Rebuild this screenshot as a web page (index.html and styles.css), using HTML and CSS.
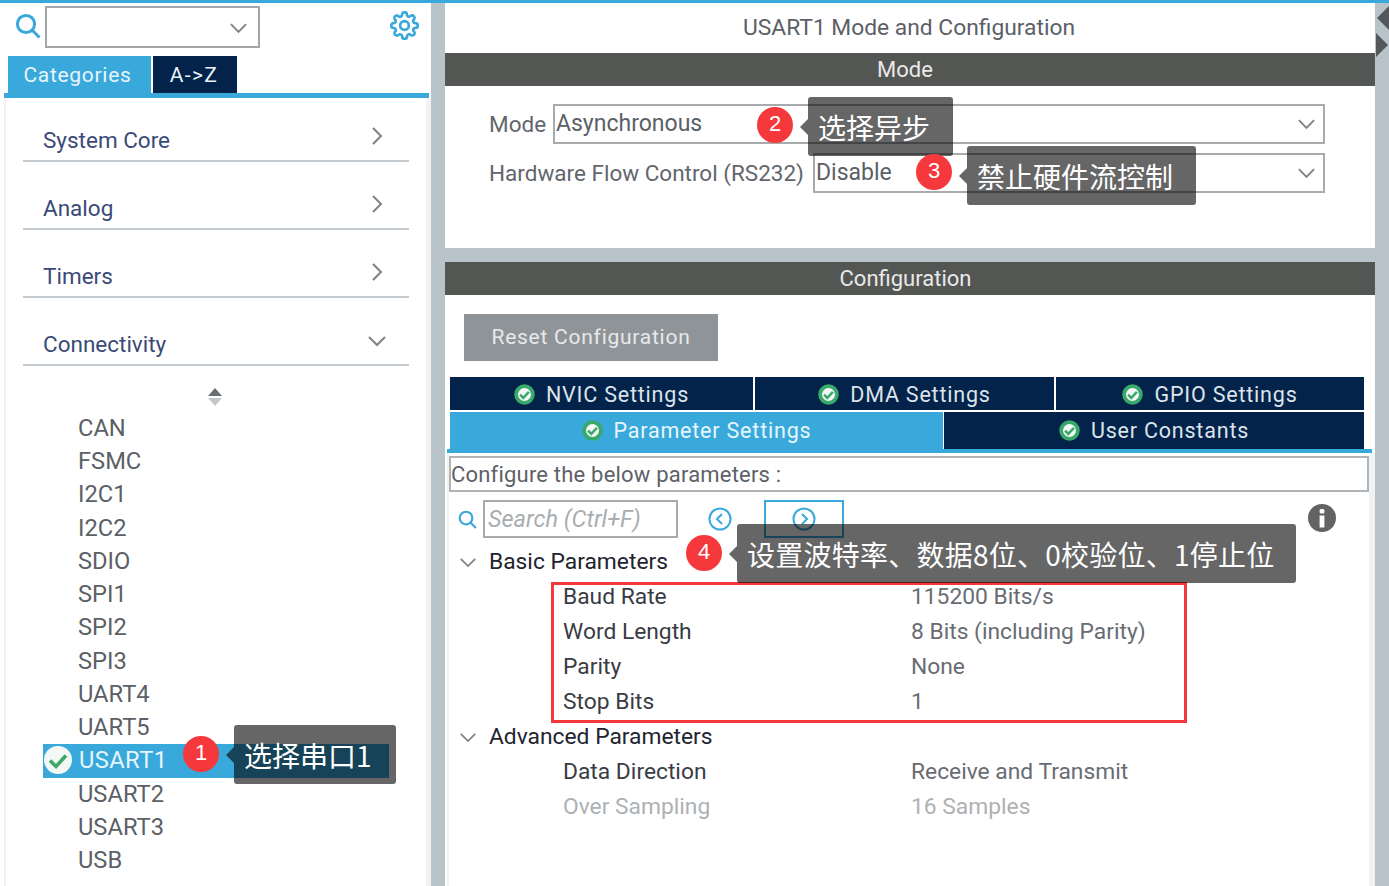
FILE: index.html
```html
<!DOCTYPE html>
<html lang="en">
<head>
<meta charset="utf-8">
<title>USART1 Mode and Configuration</title>
<link rel="stylesheet" href="styles.css">
</head>
<body>
<svg class="defs" width="0" height="0" aria-hidden="true">
  <symbol id="ok" viewBox="0 0 20 20">
    <circle cx="10" cy="10" r="8" fill="#f2f8f4" stroke="#39a96b" stroke-width="3.6"/>
    <path d="M5.8 10.2l3 3 5.4-5.6" fill="none" stroke="#39a96b" stroke-width="2.4"/>
  </symbol>
  <symbol id="down" viewBox="0 0 20 12">
    <path d="M2 2l8 8 8-8" fill="none" stroke="#7f8386" stroke-width="2"/>
  </symbol>
  <symbol id="right" viewBox="0 0 12 20">
    <path d="M2 2l8 8-8 8" fill="none" stroke="#7f8386" stroke-width="2"/>
  </symbol>
  <symbol id="search" viewBox="0 0 26 26">
    <circle cx="11" cy="11" r="8.6" fill="none" stroke="#39a9dc" stroke-width="3"/>
    <path d="M17 17l7.500 7.500" fill="none" stroke="#39a9dc" stroke-width="3"/>
  </symbol>
</svg>
<div class="app">
  <div class="topline"></div>
  <div class="columns">
    <aside class="left">
      <div class="searchbar">
        <svg class="search-icon"><use href="#search"/></svg>
        <div class="combo"><svg class="combo-arrow"><use href="#down"/></svg></div>
        <svg class="gear" viewBox="0 0 24 24"><circle cx="12" cy="12" r="3.6"/><path d="M19.4 15a1.65 1.65 0 0 0 .33 1.82l.06.06a2 2 0 0 1 0 2.83 2 2 0 0 1-2.83 0l-.06-.06a1.65 1.65 0 0 0-1.82-.33 1.65 1.65 0 0 0-1 1.51V21a2 2 0 0 1-2 2 2 2 0 0 1-2-2v-.09A1.65 1.65 0 0 0 9 19.4a1.65 1.65 0 0 0-1.82.33l-.06.06a2 2 0 0 1-2.83 0 2 2 0 0 1 0-2.83l.06-.06a1.65 1.65 0 0 0 .33-1.82 1.65 1.65 0 0 0-1.51-1H3a2 2 0 0 1-2-2 2 2 0 0 1 2-2h.09A1.65 1.65 0 0 0 4.6 9a1.65 1.65 0 0 0-.33-1.82l-.06-.06a2 2 0 0 1 0-2.83 2 2 0 0 1 2.83 0l.06.06a1.65 1.65 0 0 0 1.82.33H9a1.65 1.65 0 0 0 1-1.51V3a2 2 0 0 1 2-2 2 2 0 0 1 2 2v.09a1.65 1.65 0 0 0 1 1.51 1.65 1.65 0 0 0 1.82-.33l.06-.06a2 2 0 0 1 2.83 0 2 2 0 0 1 0 2.83l-.06.06a1.65 1.65 0 0 0-.33 1.82V9a1.65 1.65 0 0 0 1.51 1H21a2 2 0 0 1 2 2 2 2 0 0 1-2 2h-.09a1.65 1.65 0 0 0-1.51 1z"/></svg>
      </div>
      <div class="side-tabs">
        <div class="side-tab side-tab-on">Categories</div>
        <div class="side-tab side-tab-off">A-&gt;Z</div>
      </div>
      <div class="side-line"></div>
      <div class="side-body">
        <div class="cat"><span>System Core</span><svg class="cat-right"><use href="#right"/></svg></div>
        <div class="cat"><span>Analog</span><svg class="cat-right"><use href="#right"/></svg></div>
        <div class="cat"><span>Timers</span><svg class="cat-right"><use href="#right"/></svg></div>
        <div class="cat"><span>Connectivity</span><svg class="cat-down"><use href="#down"/></svg></div>
        <div class="sorter"><i class="sort-up"></i><i class="sort-down"></i></div>
        <ul class="periph">
          <li>CAN</li><li>FSMC</li><li>I2C1</li><li>I2C2</li><li>SDIO</li><li>SPI1</li><li>SPI2</li><li>SPI3</li><li>UART4</li><li>UART5</li>
          <li class="periph-on"><svg class="periph-ok" viewBox="0 0 28 28"><circle cx="14" cy="14" r="14" fill="#f4f8f5"/><path d="M6 14.500l6 6 10-11" fill="none" stroke="#3fa768" stroke-width="3.600"/></svg>USART1</li>
          <li>USART2</li><li>USART3</li><li>USB</li>
        </ul>
      </div>
    </aside>
    <main class="right">
      <section class="mode">
        <h1 class="title">USART1 Mode and Configuration</h1>
        <div class="bar bar-mode">Mode</div>
        <div class="mode-form">
          <div class="mode-row"><label class="label-a">Mode</label><div class="select">Asynchronous<svg class="select-arrow"><use href="#down"/></svg></div></div>
          <div class="mode-row"><label class="label-b">Hardware Flow Control (RS232)</label><div class="select">Disable<svg class="select-arrow"><use href="#down"/></svg></div></div>
        </div>
      </section>
      <section class="config">
        <div class="bar bar-config">Configuration</div>
        <div class="reset-wrap"><div class="reset">Reset Configuration</div></div>
        <div class="tabs tabs-top">
          <div class="tab tab-nvic"><svg class="ok"><use href="#ok"/></svg>NVIC Settings</div>
          <div class="tab tab-dma"><svg class="ok"><use href="#ok"/></svg>DMA Settings</div>
          <div class="tab tab-gpio"><svg class="ok"><use href="#ok"/></svg>GPIO Settings</div>
        </div>
        <div class="tabs tabs-low">
          <div class="tab tab-param"><svg class="ok"><use href="#ok"/></svg>Parameter Settings</div>
          <div class="tab tab-user"><svg class="ok"><use href="#ok"/></svg>User Constants</div>
        </div>
        <div class="tabline"></div>
        <div class="config-inner">
          <div class="hint">Configure the below parameters :</div>
          <div class="tools">
            <svg class="tool-search"><use href="#search"/></svg>
            <div class="tool-input">Search (Ctrl+F)</div>
            <svg class="round round-prev" viewBox="0 0 24 24"><circle cx="12" cy="12" r="10.500"/><path d="M14 7l-5 5 5 5"/></svg>
            <div class="next-box"><svg class="round" viewBox="0 0 24 24"><circle cx="12" cy="12" r="10.500"/><path d="M10 7l5 5-5 5"/></svg></div>
            <svg class="info" viewBox="0 0 28 28"><circle cx="14" cy="14" r="14" fill="#636363"/><rect x="11.600" y="5" width="4.800" height="4.600" rx="1.500" fill="#fff"/><rect x="11.600" y="11.500" width="4.800" height="12" fill="#fff"/></svg>
          </div>
          <div class="group"><svg class="group-arrow"><use href="#down"/></svg>Basic Parameters</div>
          <div class="param"><span class="param-key">Baud Rate</span><span class="param-val">115200 Bits/s</span></div>
          <div class="param"><span class="param-key">Word Length</span><span class="param-val">8 Bits (including Parity)</span></div>
          <div class="param"><span class="param-key">Parity</span><span class="param-val">None</span></div>
          <div class="param"><span class="param-key">Stop Bits</span><span class="param-val">1</span></div>
          <div class="group"><svg class="group-arrow"><use href="#down"/></svg>Advanced Parameters</div>
          <div class="param"><span class="param-key">Data Direction</span><span class="param-val">Receive and Transmit</span></div>
          <div class="param param-off"><span class="param-key">Over Sampling</span><span class="param-val">16 Samples</span></div>
        </div>
      </section>
    </main>
    <div class="rail"><i class="rail-left"></i><i class="rail-right"></i></div>
  </div>
  <div class="redbox"></div>
  <div class="badge badge-1">1</div>
  <div class="note note-1">选择串口1</div>
  <div class="badge badge-2">2</div>
  <div class="note note-2">选择异步</div>
  <div class="badge badge-3">3</div>
  <div class="note note-3">禁止硬件流控制</div>
  <div class="badge badge-4">4</div>
  <div class="note note-4">设置波特率、数据8位、0校验位、1停止位</div>
</div>
</body>
</html>
```
FILE: styles.css
```css
* { box-sizing: border-box; }
html, body { margin: 0; padding: 0; background: #fff; }
body { font-family: Roboto, "Liberation Sans", sans-serif; color: #555; overflow: hidden; }
.defs { position: absolute; }
.app { position: relative; width: 1389px; height: 886px; overflow: hidden; display: flex; flex-direction: column; }
.topline { height: 3px; background: #39a9dc; flex: none; }
.columns { flex: 1; display: flex; min-height: 0; }

/* left column */
.left { width: 431px; flex: none; display: flex; flex-direction: column; }
.searchbar { height: 53px; flex: none; display: flex; align-items: flex-start; position: relative; }
.search-icon { width: 26px; height: 26px; margin: 10px 0 0 15px; }
.combo { width: 215px; height: 42px; margin: 3px 0 0 4px; border: 2px solid #a2a6a8; position: relative; }
.combo-arrow { position: absolute; right: 10px; top: 14px; width: 19px; height: 12px; }
.gear { width: 29px; height: 29px; margin: 8px 0 0 130px; fill: none; stroke: #39a9dc; stroke-width: 2.200; }
.side-tabs { display: flex; height: 37px; flex: none; padding-left: 8px; gap: 2px; }
.side-tab { display: flex; align-items: center; justify-content: center; font-size: 21px; letter-spacing: .7px; color: #e8f4fa; }
.side-tab-on { width: 143px; background: #39a9dc; padding-right: 4px; }
.side-tab-off { width: 84px; background: #03234b; letter-spacing: 1.400px; padding-right: 2px; }
.side-line { height: 5px; flex: none; width: 425px; margin-left: 4px; background: #39a9dc; }
.side-body { flex: 1; margin-left: 4px; width: 427px; border-left: 2px solid #f0f2f4; border-right: 5px solid #f0f2f4; padding: 0 0 0 17px; }
.cat { height: 68px; width: 386px; border-bottom: 2px solid #c0cad0; display: flex; justify-content: space-between; align-items: flex-end; padding: 0 25px 7px 20px; font-size: 22.500px; color: #3a4a78; }
.cat:first-child { height: 64px; }
.cat-right { width: 12px; height: 20px; margin: 0 1px 7px 0; }
.cat-down { width: 20px; height: 12px; margin: 0 -3px 10px 0; }
.sorter { height: 45.800px; padding: 22px 0 0 185px; display: flex; flex-direction: column; }
.sort-up, .sort-down { display: block; width: 0; height: 0; border-left: 7px solid transparent; border-right: 7px solid transparent; }
.sort-up { border-bottom: 8px solid #6a6e70; margin-bottom: 2px; }
.sort-down { border-top: 8px solid #c4c7c9; }
.periph { list-style: none; margin: 0; padding: 0 0 0 20px; font-size: 23.700px; color: #5b5f66; }
.periph li { height: 33.250px; line-height: 33.250px; padding-left: 35px; position: relative; white-space: nowrap; }
.periph .periph-on { background: #39a9dc; color: #e6f5fc; width: 346px; padding-left: 36px; letter-spacing: .4px; }
.periph-ok { position: absolute; left: 1px; top: 2px; width: 28px; height: 28px; }

/* right column */
.right { width: 930px; flex: none; margin-left: 14px; display: flex; flex-direction: column; gap: 14px; background: #b8c4ca; box-shadow: -14px 0 0 #b8c4ca; }
.mode { height: 245px; flex: none; background: #fff; }
.title { margin: 0; height: 50px; font-size: 22.800px; font-weight: 400; line-height: 50px; text-align: center; color: #5c6066; padding-right: 2px; }
.bar { height: 33px; background: #545654; color: #e9e9e9; font-size: 22px; line-height: 33px; text-align: center; }
.bar-mode { padding-right: 10px; line-height: 34px; }
.bar-config { padding-right: 9px; }
.mode-form { padding: 18px 50px 0 0; display: flex; flex-direction: column; gap: 10px; }
.mode-row { display: flex; align-items: center; font-size: 23px; padding-left: 44px; height: 39px; }
.mode-row label { color: #62666c; white-space: nowrap; font-size: 22.500px; }
.label-a { width: 64px; }
.label-b { width: 324px; }
.select { flex: 1; height: 40px; line-height: 35px; border: 2px solid #a7abad; padding-left: 1px; position: relative; color: #5b5f66; }
.select-arrow { position: absolute; right: 7px; top: 12px; width: 19px; height: 12px; }
.config { flex: 1; background: #fff; min-height: 0; display: flex; flex-direction: column; }
.reset-wrap { height: 82px; padding: 19px 0 0 19px; flex: none; }
.reset { width: 254px; height: 47px; background: #8e9498; color: #e8e9ea; font-size: 21px; letter-spacing: .75px; line-height: 47px; text-align: center; }
.tabs { display: flex; flex: none; margin-left: 5px; width: 914px; gap: 2px; }
.tabs-top { height: 33px; margin-bottom: 2px; }
.tabs-low { height: 37px; }
.tab { display: flex; align-items: center; justify-content: center; font-size: 21.500px; letter-spacing: .8px; color: #dde4ea; background: #03234b; }
.tabs-top .tab { padding-top: 2px; }
.ok { width: 21px; height: 21px; margin-right: 11px; }
.tab-nvic { width: 303px; }
.tab-dma { width: 299px; }
.tab-gpio { width: 308px; }
.tab-param { width: 493px; background: #39a9dc; color: #e8f6fc; }
.tab-user { flex: 1; margin-left: -1px; }
.tabline { height: 4px; flex: none; background: #39a9dc; margin-left: 2px; width: 925px; }
.config-inner { flex: 1; min-height: 0; margin-left: 2px; width: 928px; border-right: 6px solid #f0f2f4; border-left: 2px solid #f0f2f4; position: relative; }
.hint { height: 36px; margin: 3px 0 0 0; width: 920px; border: 2px solid #b0b4b6; font-size: 22px; line-height: 33px; letter-spacing: .2px; color: #5d6168; white-space: nowrap; }
.tools { height: 44px; margin: 8px 0 0 -1px; display: flex; align-items: flex-start; position: relative; }
.tool-search { width: 19px; height: 19px; margin: 10px 0 0 10px; }
.tool-input { width: 195px; height: 38px; margin-left: 6px; border: 2px solid #a7abad; font-size: 23.500px; font-style: italic; line-height: 35px; padding-left: 3px; color: #a9adb0; white-space: nowrap; }
.round { width: 24px; height: 24px; fill: none; stroke: #39a9dc; stroke-width: 2; }
.round-prev { margin: 7px 0 0 30px; }
.next-box { width: 80px; height: 38px; margin-left: 32px; border: 2px solid #39a9dc; display: flex; align-items: center; justify-content: center; }
.info { width: 28px; height: 28px; margin: 4px 0 0 464px; }
.group { height: 35px; display: flex; align-items: center; font-size: 22.800px; color: #22242e; position: relative; padding-left: 40px; }
.group-arrow { width: 18px; height: 11px; position: absolute; left: 10px; top: 13px; }
.param { height: 35px; display: flex; align-items: center; font-size: 22.800px; padding-left: 114px; }
.param-key { width: 348px; color: #3a3c44; white-space: nowrap; }
.param-val { color: #686c72; white-space: nowrap; }
.param-off .param-key, .param-off .param-val { color: #aeb1b4; }

/* right rail */
.rail { flex: 1; background: #b8c4ca; position: relative; }
.rail-left, .rail-right { position: absolute; width: 0; height: 0; border-top: 12px solid transparent; border-bottom: 12px solid transparent; }
.rail-left { left: 2px; top: 3px; border-right: 12px solid #54585a; }
.rail-right { left: 1px; top: 30px; border-left: 12px solid #54585a; }

/* annotations */
.redbox { position: absolute; left: 551px; top: 582px; width: 636px; height: 141px; border: 3px solid #f5383b; }
.badge { position: absolute; width: 36px; height: 36px; border-radius: 50%; background: #f5383b; color: #fff; font-family: "Liberation Sans", sans-serif; font-size: 22px; line-height: 34px; text-align: center; }
.note { position: absolute; height: 59px; border-radius: 3px; background: rgba(0,0,0,.6); color: #fff; font-family: "Noto Sans CJK SC", "Liberation Sans", sans-serif; font-size: 28px; line-height: 61px; white-space: nowrap; padding-left: 10px; }
.note::before { content: ""; position: absolute; left: -8px; top: 50%; margin-top: -8px; width: 0; height: 0; border-top: 8px solid transparent; border-bottom: 8px solid transparent; border-right: 8px solid rgba(0,0,0,.6); }
.badge-1 { left: 183px; top: 736px; }
.note-1 { left: 234px; top: 725px; width: 162px; }
.badge-2 { left: 757px; top: 107px; }
.note-2 { left: 808px; top: 97px; width: 145px; }
.badge-3 { left: 916px; top: 154px; }
.note-3 { left: 967px; top: 146px; width: 229px; }
.badge-4 { left: 686px; top: 535px; }
.note-4 { left: 737px; top: 524px; width: 559px; letter-spacing: .25px; }
```
